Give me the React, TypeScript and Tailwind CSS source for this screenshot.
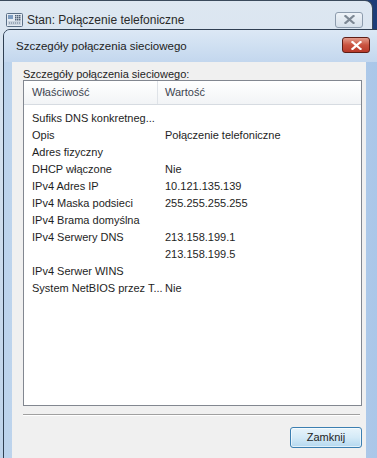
const ROWS: [string, string][] = [
  ['Sufiks DNS konkretneg...', ''],
  ['Opis', 'Połączenie telefoniczne'],
  ['Adres fizyczny', ''],
  ['DHCP włączone', 'Nie'],
  ['IPv4 Adres IP', '10.121.135.139'],
  ['IPv4 Maska podsieci', '255.255.255.255'],
  ['IPv4 Brama domyślna', ''],
  ['IPv4 Serwery DNS', '213.158.199.1'],
  ['', '213.158.199.5'],
  ['IPv4 Serwer WINS', ''],
  ['System NetBIOS przez T...', 'Nie'],
];

function PhoneIcon() {
  return (
    <svg width="17" height="16" viewBox="0 0 17 16">
      <rect x="0.5" y="1.5" width="16" height="13" rx="1" fill="#e4ebf3" stroke="#5b6f86" />
      <rect x="2" y="3" width="5" height="4" fill="#7d9cc0" />
      <rect x="2" y="9" width="13" height="4" fill="#c9d3de" />
      {[9, 11, 13].map(x => [3, 5, 7].map(y => (
        <rect key={`${x}-${y}`} x={x} y={y} width="1.5" height="1.5" fill="#4d5f75" />
      )))}
      {[3, 5, 7, 9, 11, 13].map(x => (
        <rect key={x} x={x} y="10.5" width="1" height="1" fill="#6b7c90" />
      ))}
    </svg>
  );
}

function XGlyph({ color }: { color: string }) {
  return (
    <svg width="11" height="9" viewBox="0 0 11 9">
      <path d="M1.5 1 L9.5 8 M9.5 1 L1.5 8" stroke={color} strokeWidth="2.2" strokeLinecap="square" />
    </svg>
  );
}

export default function App() {
  return (
    <div className="relative w-[377px] h-[458px] overflow-hidden bg-[#1d3d78] font-['Liberation_Sans',Arial,sans-serif] text-[#1e1e1e]">
      {/* outer window */}
      <div className="absolute left-0 top-0 w-[373px] h-[470px] rounded-tr-[8px] border-t border-r border-[#3a4a5c] bg-gradient-to-b from-[#dde7f1] via-[#cddcec] to-[#bcd2ea]">
        <div className="flex items-center h-[29px] pt-[8px] pl-[6px] pr-[9px]">
          <PhoneIcon />
          <span className="ml-[4px] text-[12px] text-[#2a2a2a]">Stan: Połączenie telefoniczne</span>
          <div className="ml-auto w-[28px] h-[16px] rounded-[3px] border border-[#8d9cad] bg-gradient-to-b from-[#eef3f8] to-[#d6e0ea] flex items-center justify-center">
            <XGlyph color="#7d8894" />
          </div>
        </div>
      </div>

      {/* inner dialog */}
      <div className="absolute left-[3px] top-[29px] w-[380px] h-[440px] rounded-tl-[7px] border border-[#2f3f52] bg-gradient-to-r from-[#bcd3ec] via-[#c9dcf0] to-[#a9c6e8] flex flex-col">
        <div className="flex items-center h-[32px] pl-[12px] pr-[10px] bg-gradient-to-b from-[#dce8f5] to-[#c3d7ee] rounded-tl-[6px]">
          <span className="text-[11.5px] text-[#222] mt-[1px]">Szczegóły połączenia sieciowego</span>
          <div className="ml-auto mr-[2px] mt-[-2px] w-[28px] h-[16px] rounded-[3px] border border-[#5e1d16] bg-gradient-to-b from-[#e39b8c] via-[#c9533f] to-[#b8392a] flex items-center justify-center">
            <XGlyph color="#ffffff" />
          </div>
        </div>

        <div className="ml-[8px] w-[354px] flex-1 bg-[#f0f0f0] pl-[11px] pr-[4px] pt-[7px] flex flex-col">
          <div className="text-[11px] h-[11px] leading-[11px]">Szczegóły połączenia sieciowego:</div>

          <div className="w-[339px] h-[326px] border border-[#828790] bg-white flex flex-col">
            <div className="flex h-[24px] items-center bg-gradient-to-b from-white to-[#f2f4f6] border-b border-[#d6dbe1] text-[11px] text-[#3c4450]">
              <div className="w-[134px] pl-[8px] border-r border-[#dfe3e8] h-full flex items-center">Właściwość</div>
              <div className="pl-[7px]">Wartość</div>
            </div>
            <div className="pt-[5px] flex flex-col text-[11px]">
              {ROWS.map(([k, v], i) => (
                <div key={i} className="flex h-[17px] items-center">
                  <div className="w-[134px] pl-[8px] whitespace-nowrap">{k}</div>
                  <div className="pl-[7px] whitespace-nowrap">{v}</div>
                </div>
              ))}
            </div>
          </div>

          <div className="mt-[8px] w-[337px] h-[2px] border-t border-[#a0a0a0] border-b border-b-white" />

          <div className="flex justify-end w-[339px] mt-[11px]">
            <button className="w-[72px] h-[21px] rounded-[3px] border border-[#3c7fb1] bg-gradient-to-b from-[#e8f4fb] via-[#d4eaf7] to-[#b4d8ef] text-[11px] text-[#1e1e1e] shadow-[inset_0_0_0_1px_rgba(255,255,255,0.6)]">
              Zamknij
            </button>
          </div>
        </div>
      </div>
    </div>
  );
}
